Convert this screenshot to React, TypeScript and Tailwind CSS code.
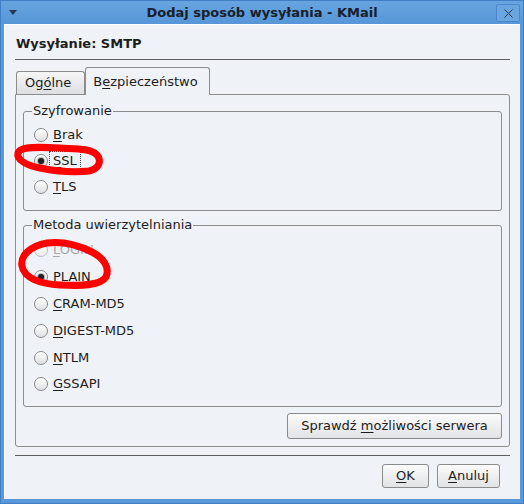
import React from 'react';

type Opt = { pre: string; key: string; post: string; checked?: boolean; disabled?: boolean; focus?: boolean };

const encryption: Opt[] = [
    { pre: '', key: 'B', post: 'rak' },
    { pre: '', key: 'S', post: 'SL', checked: true, focus: true },
    { pre: '', key: 'T', post: 'LS' },
];

const auth: Opt[] = [
    { pre: '', key: 'L', post: 'OGIN', disabled: true },
    { pre: 'PLAIN', key: '', post: '', checked: true },
    { pre: '', key: 'C', post: 'RAM-MD5' },
    { pre: '', key: 'D', post: 'IGEST-MD5' },
    { pre: '', key: 'N', post: 'TLM' },
    { pre: '', key: 'G', post: 'SSAPI' },
];

const Radio: React.FC<{ opt: Opt; rowClass: string }> = ({ opt, rowClass }) => {
    const text = (
        <>
            {opt.pre}
            {opt.key && <span className="underline decoration-1 underline-offset-[2px]">{opt.key}</span>}
            {opt.post}
        </>
    );
    return (
        <div className={`flex items-center pl-[10px] ${rowClass}`}>
            <div
                className={`w-[14px] h-[14px] rounded-full border flex items-center justify-center bg-gradient-to-b ${
                    opt.disabled ? 'border-[#bcbcbc] from-[#fbfbfb] to-[#eeeeee]' : 'border-[#8a8a8a] from-white to-[#dfe0e2]'
                }`}
            >
                {opt.checked && <div className="w-[6px] h-[6px] rounded-full bg-[#202020] shadow-[0_0_0_1px_rgba(30,30,30,0.3)]" />}
            </div>
            {opt.focus ? (
                <span className="ml-[1px] px-[3px] leading-[16px] border border-dotted border-[#444] py-px">{text}</span>
            ) : (
                <span className={`ml-[5px] leading-[16px] ${opt.disabled ? 'text-[#a9a9a9]' : ''}`}>{text}</span>
            )}
        </div>
    );
};

const Button: React.FC<{ className: string; children: React.ReactNode }> = ({ className, children }) => (
    <div className={`flex items-center justify-center border border-[#8b8b8b] rounded-[3px] bg-gradient-to-b from-[#fbfbfb] to-[#e2e3e5] ${className}`}>
        {children}
    </div>
);

const App: React.FC = () => {
    return (
        <div className="relative w-[524px] h-[504px] flex flex-col bg-[#5a99d9] border border-[#417fc5] font-['DejaVu_Sans',sans-serif] text-[13px] text-[#1d1d1d]">
            {/* title bar */}
            <div className="h-[23px] grid grid-cols-[1fr_auto_1fr] items-center bg-gradient-to-b from-[#67a4e0] to-[#5796d8]">
                <div className="pl-[8px] flex items-center">
                    <svg width="8" height="5" viewBox="0 0 8 5">
                        <path d="M0 0 H8 L4 5 Z" fill="#2e3a4b" />
                    </svg>
                </div>
                <div className="font-bold text-[#17202b] leading-[16px]">Dodaj sposób wysyłania - KMail</div>
                <div className="flex justify-end pr-[3px]">
                    <div className="w-[24px] h-[18px] mt-[1px] border border-[#4a86c9] rounded-[2px] bg-[#69a5df] flex items-center justify-center">
                        <svg width="9" height="9" viewBox="0 0 9 9">
                            <path d="M0.5 0.5 L8.5 8.5 M8.5 0.5 L0.5 8.5" stroke="#2a3646" strokeWidth="1" />
                        </svg>
                    </div>
                </div>
            </div>

            {/* client area */}
            <div className="mx-[3px] mb-[4px] flex-1 flex flex-col bg-[#eff2f6] border-t border-l border-white px-[10px]">
                <div className="pt-[11px] leading-[16px] font-bold pl-[1px]">Wysyłanie: SMTP</div>
                <div className="mt-[7px] h-px bg-[#5f5f5f]" />

                {/* tabs */}
                <div className="mt-[7px] h-[27px] flex items-end">
                    <div className="h-[23px] pl-[8px] pr-[13px] flex items-center border border-b-0 border-[#8d8d8d] rounded-t-[3px] bg-gradient-to-b from-[#f6f6f6] to-[#dedfe1] ml-px">
                        Og<span className="underline decoration-1 underline-offset-[2px]">ó</span>lne
                    </div>
                    <div className="relative z-10 h-[28px] -mb-px pl-[7px] pr-[11px] flex items-center border border-b-0 border-[#8d8d8d] rounded-t-[3px] bg-[#eff2f6]">
                        B<span className="underline decoration-1 underline-offset-[2px]">e</span>zpieczeństwo
                    </div>
                </div>

                {/* panel */}
                <div className="h-[353px] flex flex-col border border-[#8d8d8d] rounded-b-[3px] rounded-tr-[3px] px-[7px] pt-[8px]">
                    <fieldset className="h-[108px] border border-[#8d8d8d] rounded-[3px] pt-[3px]">
                        <legend className="ml-[8px] px-[1px] leading-[16px]">Szyfrowanie</legend>
                        {encryption.map((o, i) => (
                            <Radio key={i} opt={o} rowClass="h-[26px]" />
                        ))}
                    </fieldset>

                    <fieldset className="mt-[6px] h-[190px] border border-[#8d8d8d] rounded-[3px] pt-[4px]">
                        <legend className="ml-[8px] px-[1px] leading-[16px]">Metoda uwierzytelniania</legend>
                        {auth.map((o, i) => (
                            <Radio key={i} opt={o} rowClass="h-[26.8px]" />
                        ))}
                    </fieldset>

                    <div className="mt-[6px] flex justify-end">
                        <Button className="w-[215px] h-[26px]">
                            Sprawdź&nbsp;<span className="underline decoration-1 underline-offset-[2px]">m</span>ożliwości serwera
                        </Button>
                    </div>
                </div>

                <div className="mt-[8px] h-px bg-[#5f5f5f]" />

                <div className="mt-[8px] flex justify-end gap-[8px] pr-[10px]">
                    <Button className="w-[47px] h-[24px]">
                        <span className="underline decoration-1 underline-offset-[2px]">O</span>K
                    </Button>
                    <Button className="w-[63px] h-[24px]">
                        <span className="underline decoration-1 underline-offset-[2px]">A</span>nuluj
                    </Button>
                </div>
            </div>

            {/* hand-drawn red marks over the dialog */}
            <svg className="absolute left-[-1px] top-[-1px] pointer-events-none" width="524" height="504" viewBox="0 0 524 504">
                <g fill="none" stroke="#ff0000" strokeWidth="7" strokeLinecap="round" strokeLinejoin="round">
                    <path d="M40 168 C28 166, 16 160, 18 153 C20 146, 40 147, 60 148 C75 149, 90 148, 97 155 C102 161, 99 169, 89 171 C72 173, 55 171, 40 168" />
                    <path d="M47 243 C30 246, 20 256, 22 266 C24 278, 40 284, 60 285 C80 286, 100 286, 106 277 C110 268, 104 258, 92 252 C80 246, 64 241, 47 243" />
                </g>
            </svg>
        </div>
    );
};

export default App;
